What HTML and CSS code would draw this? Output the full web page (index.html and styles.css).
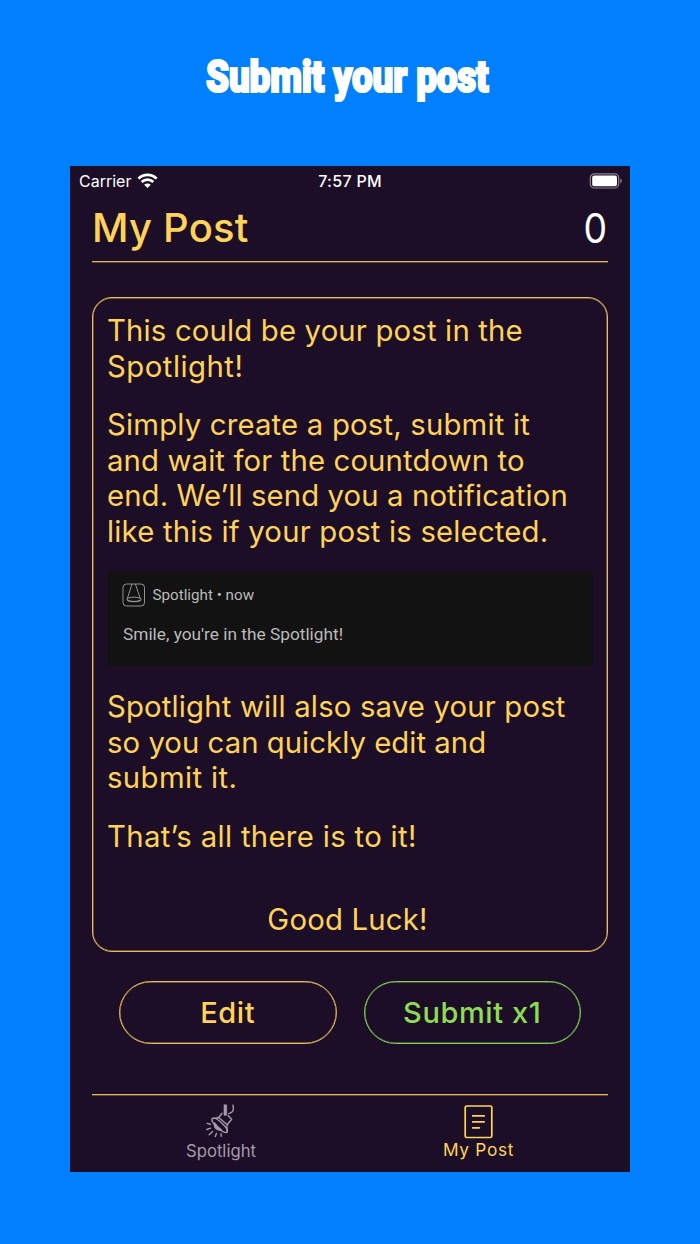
FILE: index.html
```html
<!DOCTYPE html>
<html lang="en">
<head>
<meta charset="utf-8">
<title>Submit your post</title>
<link rel="stylesheet" href="styles.css">
</head>
<body>
<h1 class="headline"><span class="headline-text">Submit your post</span></h1>
<main class="phone">
  <div class="status">
    <div class="carrier">Carrier
      <svg class="wifi" width="21" height="16" viewBox="0 0 21 16" fill="none" stroke="#fff" stroke-width="2.7"><path d="M1.4 5.6C6.6.5 14.4.5 19.6 5.6M4.7 9C8 5.8 13 5.8 16.3 9"/><path d="M7.2 11.8c2-1.8 4.6-1.8 6.6 0L10.5 15z" fill="#fff" stroke="none"/></svg>
    </div>
    <div class="time">7:57 PM</div>
    <svg class="battery" width="34" height="16" viewBox="0 0 34 16"><rect x="1.3" y=".8" width="28.4" height="14.2" rx="4" fill="none" stroke="#8b8390" stroke-width="1.2"/><rect x="3.2" y="2.6" width="24.8" height="10.6" rx="2" fill="#fff"/><path d="M31.4 5.6c2 .8 2 4 0 4.8z" fill="#8b8390"/></svg>
  </div>
  <header class="header"><h2 class="title">My Post</h2><span class="count">0</span></header>
  <section class="card">
    <p class="para"><span class="l1">This could be your post in the</span><br><span class="l2">Spotlight!</span></p>
    <p class="para"><span class="l3">Simply create a post, submit it</span><br><span class="l4">and wait for the countdown to</span><br><span class="l5">end. We’ll send you a notification</span><br><span class="l6">like this if your post is selected.</span></p>
    <div class="notification">
      <div class="app">
        <svg width="24" height="24" viewBox="0 0 24 24" fill="none" stroke="#a3a3a3" stroke-width=".9"><rect x="1" y="1" width="21.5" height="22" rx="3.5"/><path d="M10 1 5.2 16M13.4 1l5 15"/><ellipse cx="12" cy="16.3" rx="7" ry="2.1"/><path d="M4.8 17c1 2.3 13.4 2.3 14.4 0"/></svg>
        <span class="app-name">Spotlight • now</span>
      </div>
      <div class="message">Smile, you're in the Spotlight!</div>
    </div>
    <p class="para"><span class="l7">Spotlight will also save your post</span><br><span class="l8">so you can quickly edit and</span><br><span class="l9">submit it.</span></p>
    <p class="para"><span class="l10">That’s all there is to it!</span></p>
    <p class="luck">Good Luck!</p>
  </section>
  <div class="actions"><button class="button">Edit</button><button class="button submit">Submit x1</button></div>
  <nav class="tabs">
    <a class="tab">
      <svg width="34" height="36" viewBox="0 0 34 36" fill="none" stroke="#a69aab" stroke-width="1.4" stroke-linecap="round" stroke-linejoin="round"><path d="M20 1v10.3h2.7V1z" fill="#a69aab" stroke-width=".6"/><path d="M29 1.3c1.1 4.2.3 7.5-4.3 8.3M18 9.3l-3.3 4.2 8.5 7.2 4.4-5.5-3.5-3.6M14.7 13.5c-2 1-4.2.2-6.2 1M23.2 20.7c-.8 2.3.6 4.8-.2 7.2"/><path d="M8.5 14.5c-2.1 1.2 1 5.5 5.1 9.3s8.4 6 9.4 4.1"/><path d="M8.5 14.5c1.7-1 6.2 1.6 10 5.2s5.8 7 4.5 8.2"/><path d="M10.5 19c-1 4.4 2.4 7.8 6.8 6.8-2.7-1.5-5-4.1-6.8-6.8z" fill="#a69aab"/><path d="M3.1 19.4l3.3.8M2.8 25.5l3.8-1.3M5.2 30.7l3.4-3.3M11.3 32.5l1.1-3M17.2 32.3l-.2-2.5"/></svg>
      <span class="spot-label">Spotlight</span>
    </a>
    <a class="tab active">
      <svg width="30" height="34" viewBox="0 0 30 34" fill="none" stroke="#ffd35a" stroke-width="1.7" stroke-linecap="round"><rect x="1.2" y="1" width="26.6" height="31.5" rx="1.5"/><path d="M8.7 10.9h11.5M8.7 16.9h11.5M8.7 22.8h6.7"/></svg>
      <span class="post-label">My Post</span>
    </a>
  </nav>
</main>
</body>
</html>
```
FILE: styles.css
```css
* { box-sizing: border-box; }
body { margin: 0; width: 700px; height: 1244px; background: #0080ff; font-family: Inter, sans-serif; overflow: hidden; }
h1, h2, p { margin: 0; font-weight: 400; }
.headline { height: 166px; padding-top: 47px; display: flex; justify-content: center; color: #fff; }
.headline-text { font: 900 45px/60px Roboto, sans-serif; white-space: nowrap; transform: translateX(-3px) scaleX(.82); -webkit-text-stroke: 2.2px #fff; letter-spacing: -.2px; }
.phone { width: 560px; height: 1006px; margin: 0 auto; background: #1d0e28; color: #ffd35a; display: flex; flex-direction: column; }
.status { height: 29px; padding: 0 7px 0 9px; display: grid; grid-template-columns: 1fr auto 1fr; align-items: center; color: #fff; font-size: 16px; }
.carrier { display: flex; gap: 6px; align-items: center; }
.time { font-weight: 500; font-size: 16px; letter-spacing: .3px; margin-right: 2px; }
.battery { justify-self: end; }
.header { margin: 0 22px; height: 67px; border-bottom: 1px solid #e3b955; box-shadow: 0 .5px 0 #9c7d42; display: flex; justify-content: space-between; align-items: center; }
.title { font-size: 40px; font-weight: 500; letter-spacing: .2px; line-height: 46px; margin-bottom: 1px; }
.count { color: #fff; font-size: 41.5px; transform: scaleX(.9); transform-origin: right; margin-right: 1px; }
.card { margin: 35px 22px 0; height: 655px; padding: 15px 14px 0; border: 1px solid #e8bd60; box-shadow: inset 0 0 0 .5px #bd974f; border-radius: 20px; display: flex; flex-direction: column; }
.para { font-size: 29.3px; line-height: 35.5px; margin-bottom: 23px; white-space: nowrap; }
.l1, .l7 { letter-spacing: .17px; }
.l2 { letter-spacing: .5px; }
.l3, .l6 { letter-spacing: .19px; }
.l4 { letter-spacing: .13px; }
.l5 { letter-spacing: .11px; }
.l8 { letter-spacing: .04px; }
.l9 { letter-spacing: .4px; }
.l10 { letter-spacing: .33px; }
.notification { height: 94px; background: #121212; color: #bababa; font-family: Roboto, sans-serif; padding: 11px 15px; margin-bottom: 23px; }
.app { display: flex; gap: 6.5px; align-items: center; height: 24px; font-size: 15.2px; }
.message { font-size: 17.3px; line-height: 22px; margin: 16px 0 0 1px; }
.luck { font-size: 29.3px; line-height: 36px; text-align: center; margin: 25px 5px 0 0; letter-spacing: .2px; }
.actions { margin: 29px 49px 0; display: flex; gap: 27px; }
.button { width: 218px; height: 63px; padding: 0; background: transparent; border: 1px solid #e8bd60; box-shadow: inset 0 0 0 .5px #bd974f; border-radius: 32px; color: #ffd35a; font: 500 29px Inter, sans-serif; letter-spacing: .6px; }
.submit { border-color: #83d056; box-shadow: inset 0 0 0 .5px #67a54b; color: #8fdb54; }
.tabs { margin: 50px 22px 0; height: 78px; border-top: 1px solid #e3b955; box-shadow: inset 0 .5px 0 #9c7d42; display: grid; grid-template-columns: 1fr 1fr; font-size: 16.7px; }
.tab { display: flex; flex-direction: column; align-items: center; color: #a69aab; padding-top: 9px; }
.tab span { line-height: 22px; }
.active { padding-top: 10px; color: #ffd35a; }
.post-label { font-size: 17.3px; letter-spacing: .7px; margin-right: 1px; }
```
